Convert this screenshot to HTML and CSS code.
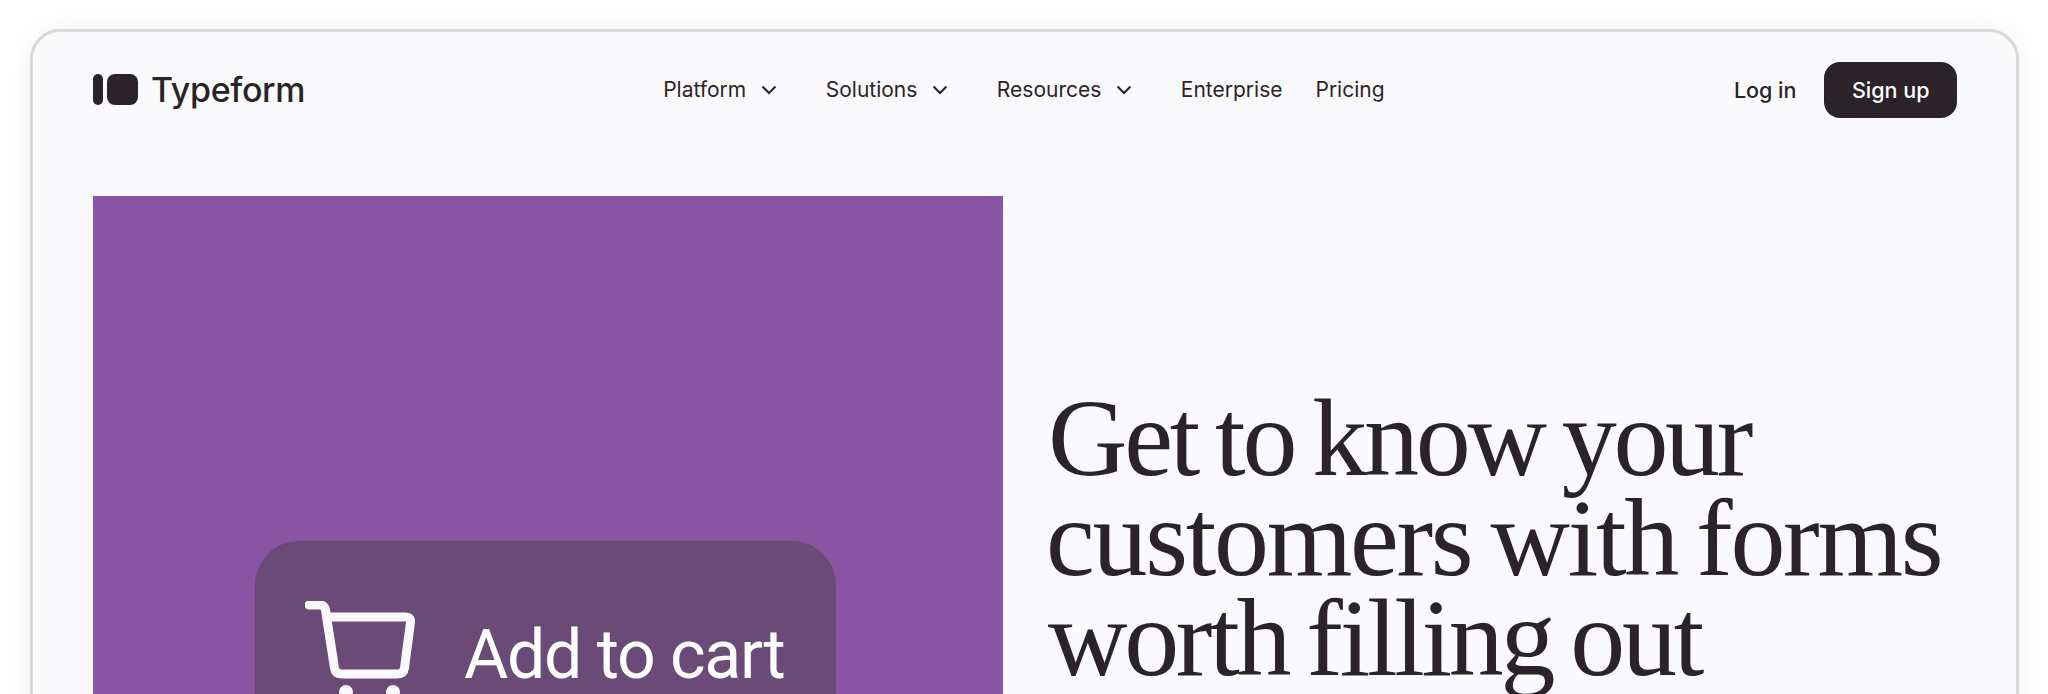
FILE: index.html
```html
<!DOCTYPE html>
<html lang="en">
<head>
    <meta charset="UTF-8">
    <meta name="viewport" content="width=device-width, initial-scale=1.0">
    <title>Typeform</title>
    <link rel="stylesheet" href="styles.css">
</head>
<body>
    <div class="window">
        <header class="top-bar">
            <a class="brand" href="#">
                <svg class="brand-mark" viewBox="0 0 45 31" width="45" height="31" aria-hidden="true">
                    <rect x="0" y="0" width="10" height="31" rx="5"/>
                    <rect x="14" y="0" width="31" height="31" rx="8"/>
                </svg>
                <span class="brand-name">Typeform</span>
            </a>
            <nav class="main-nav">
                <a class="nav-item has-menu" href="#">Platform
                    <svg class="chevron" viewBox="0 0 16 10" width="16" height="10" aria-hidden="true"><path d="M1.5 1.5 8 8l6.5-6.5"/></svg>
                </a>
                <a class="nav-item has-menu" href="#">Solutions
                    <svg class="chevron" viewBox="0 0 16 10" width="16" height="10" aria-hidden="true"><path d="M1.5 1.5 8 8l6.5-6.5"/></svg>
                </a>
                <a class="nav-item has-menu" href="#">Resources
                    <svg class="chevron" viewBox="0 0 16 10" width="16" height="10" aria-hidden="true"><path d="M1.5 1.5 8 8l6.5-6.5"/></svg>
                </a>
                <a class="nav-item" href="#">Enterprise</a>
                <a class="nav-item" href="#">Pricing</a>
            </nav>
            <div class="account">
                <a class="login" href="#">Log in</a>
                <a class="signup" href="#">Sign up</a>
            </div>
        </header>

        <main class="hero">
            <section class="hero-media">
                <div class="cart-card">
                    <svg class="cart-icon" viewBox="0 0 110 100" width="110" height="100" aria-hidden="true">
                        <path d="M4 4h11c3 0 5 2 5.500 5l9 58c.5 4 3 6 7 6h56c4 0 6.500-2 7-6l6-46c.5-3-1.500-5-4.500-5H22"/>
                        <circle cx="41" cy="91" r="7" class="wheel"/>
                        <circle cx="88" cy="91" r="7" class="wheel"/>
                    </svg>
                    <span class="cart-label">Add to cart</span>
                </div>
            </section>
            <section class="hero-copy">
                <h1>
                    <span class="line">Get to know your</span>
                    <span class="line line-wide">customers with forms</span>
                    <span class="line">worth filling out</span>
                </h1>
            </section>
        </main>
    </div>
</body>
</html>
```

FILE: styles.css
```css
html, body { height: 100%; overflow: hidden; }
body { margin: 0; background-color: #fff; color: #2a2329; font-family: Inter, "Liberation Sans", sans-serif; }
a { color: inherit; text-decoration: none; }

.window { margin: 29px 29px 0 30px; height: 900px; box-sizing: border-box; background-color: #fafafc; border: 3px solid #d9d9d9; border-radius: 30px; box-shadow: 0 0 24px rgba(0,0,0,0.06); }

.top-bar { display: flex; align-items: center; height: 73px; padding: 21px 59px 0 60px; }
.brand { display: flex; align-items: center; gap: 13px; }
.brand-mark { fill: #2a2329; display: block; }
.brand-name { font-size: 34px; font-weight: 500; letter-spacing: -0.01em; }

.main-nav { display: flex; align-items: center; margin-left: 358px; font-size: 21px; }
.nav-item { display: flex; align-items: center; margin-right: 33px; }
.nav-item.has-menu { margin-right: 48.500px; }
.chevron { margin-left: 15px; fill: none; stroke: #2a2329; stroke-width: 2; }

.account { display: flex; align-items: center; gap: 28px; margin-left: auto; font-size: 21.500px; font-weight: 500; }
.signup { display: flex; align-items: center; height: 56px; padding: 0 27.500px; border-radius: 16px; background-color: #2a2329; color: #fff; }

.hero { display: flex; align-items: flex-start; padding: 0 60px; margin-top: 70px; }
.hero-media { flex: none; width: 910px; height: 700px; box-sizing: border-box; padding: 345px 167px 0 162px; background-color: #8a54a4; }
.cart-card { display: flex; align-items: flex-start; height: 300px; box-sizing: border-box; padding: 60px 0 0 50px; background-color: #6a4a76; border-radius: 44px; color: #fff; }
.cart-icon { flex: none; fill: none; stroke: #fbf8fc; stroke-width: 9; stroke-linecap: round; stroke-linejoin: round; }
.cart-icon .wheel { fill: #fbf8fc; stroke: none; }
.cart-label { margin: 0 0 0 49px; font-family: Roboto, "Liberation Sans", sans-serif; font-size: 68px; font-weight: 400; letter-spacing: -1.300px; line-height: 1; padding-top: 20px; }

.hero-copy { flex: 1; padding: 192px 0 0 45px; }
h1 { margin: 0; font-family: "Liberation Serif", serif; font-size: 110px; font-weight: 400; line-height: 100px; letter-spacing: -0.03em; word-spacing: -6px; }
.line { display: block; white-space: nowrap; }
.line-wide { margin-left: -2px; letter-spacing: -2.300px; }
```
